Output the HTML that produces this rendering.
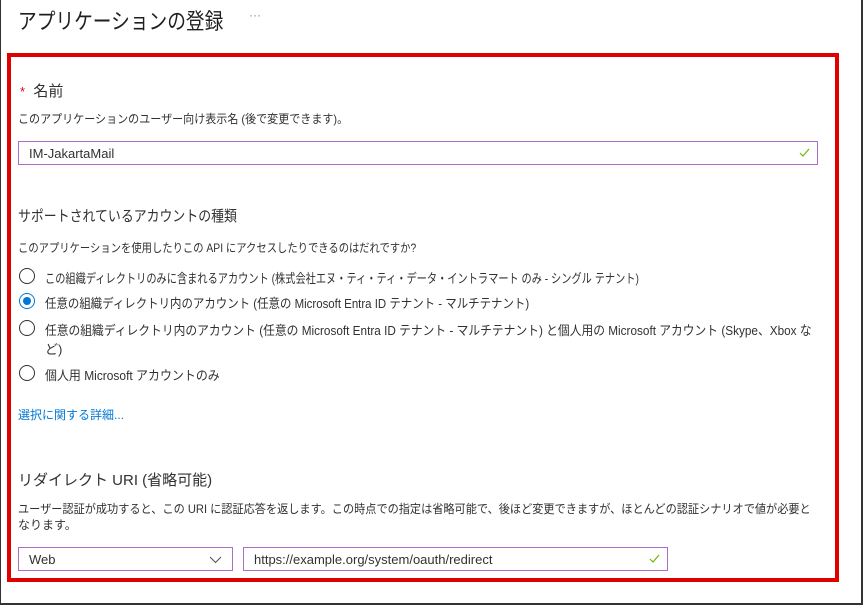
<!DOCTYPE html><html><head><meta charset="utf-8"><style>
*{box-sizing:border-box;margin:0;padding:0}
body{width:863px;height:605px;background:#fff;font-family:"Liberation Sans","Noto Sans CJK JP",sans-serif;color:#323130;position:relative;overflow:hidden}
.frame{position:absolute;left:0;top:0;width:863px;height:605px;border:1px solid #333;border-top:none;border-bottom:2px solid #333;border-right:2px solid #333}
.a{position:absolute;white-space:nowrap;transform-origin:0 0}
.red{position:absolute;left:7px;top:53px;width:832px;height:529px;border:4px solid #e00000}
.inp{position:absolute;border:1px solid #a86fc4;height:24px;font-size:13px;padding:4px 10px;color:#323130}
.ck{position:absolute;right:7px;top:6px}
.r{position:absolute;width:16px;height:16px;border:1px solid #323130;border-radius:50%}
.r.on{border-color:#0078d4}
.r.on::after{content:"";position:absolute;left:3px;top:3px;width:8px;height:8px;border-radius:50%;background:#0078d4}
.t{font-size:13px}
</style></head><body>
<div class="frame"></div>
<div class="a" style="left:18px;top:4px;font-size:22px;color:#201f1e;transform:scaleX(.85)">アプリケーションの登録</div>
<div class="a" style="left:249px;top:8px;font-size:12px;color:#888">···</div>
<div class="red"></div>
<div class="a" style="left:20px;top:80px;font-size:15px"><span style="color:#e00;font-size:13px">*</span>&nbsp; 名前</div>
<div class="a" style="left:18px;top:110px;font-size:12px;transform:scaleX(.92)">このアプリケーションのユーザー向け表示名 (後で変更できます)。</div>
<div class="inp" style="left:18px;top:141px;width:800px">IM-JakartaMail<svg class="ck" width="11" height="9" viewBox="0 0 11 9"><path d="M1 5l3 3 6-7" fill="none" stroke="#6bb700" stroke-width="1.2"/></svg></div>
<div class="a" style="left:18px;top:205px;font-size:15px;transform:scaleX(.86)">サポートされているアカウントの種類</div>
<div class="a" style="left:18px;top:239px;font-size:12px;transform:scaleX(.86)">このアプリケーションを使用したりこの API にアクセスしたりできるのはだれですか?</div>
<div class="r" style="left:19px;top:268px"></div><div class="a t" style="left:45px;top:268px;transform:scaleX(.785)">この組織ディレクトリのみに含まれるアカウント (株式会社エヌ・ティ・ティ・データ・イントラマート のみ - シングル テナント)</div>
<div class="r on" style="left:19px;top:293px"></div><div class="a t" style="left:45px;top:293px;transform:scaleX(.88)">任意の組織ディレクトリ内のアカウント (任意の Microsoft Entra ID テナント - マルチテナント)</div>
<div class="r" style="left:19px;top:320px"></div><div class="a t" style="left:45px;top:320px;transform:scaleX(.905)">任意の組織ディレクトリ内のアカウント (任意の Microsoft Entra ID テナント - マルチテナント) と個人用の Microsoft アカウント (Skype、Xbox な</div>
<div class="a t" style="left:45px;top:339px">ど)</div>
<div class="r" style="left:19px;top:365px"></div><div class="a t" style="left:45px;top:365px;transform:scaleX(.92)">個人用 Microsoft アカウントのみ</div>
<div class="a" style="left:18px;top:406px;font-size:12px;color:#0078d4">選択に関する詳細...</div>
<div class="a" style="left:18px;top:469px;font-size:15px">リダイレクト URI (省略可能)</div>
<div class="a" style="left:18px;top:500px;font-size:12px;transform:scaleX(.93)">ユーザー認証が成功すると、この URI に認証応答を返します。この時点での指定は省略可能で、後ほど変更できますが、ほとんどの認証シナリオで値が必要と</div>
<div class="a" style="left:18px;top:516px;font-size:12px">なります。</div>
<div class="inp" style="left:18px;top:547px;width:215px">Web<svg style="position:absolute;right:10px;top:8px" width="13" height="8" viewBox="0 0 13 8"><path d="M1 1l5.5 5.5L12 1" fill="none" stroke="#555" stroke-width="1.1"/></svg></div>
<div class="inp" style="left:243px;top:547px;width:425px">https://example.org/system/oauth/redirect<svg class="ck" width="11" height="9" viewBox="0 0 11 9"><path d="M1 5l3 3 6-7" fill="none" stroke="#6bb700" stroke-width="1.2"/></svg></div>
</body></html>
